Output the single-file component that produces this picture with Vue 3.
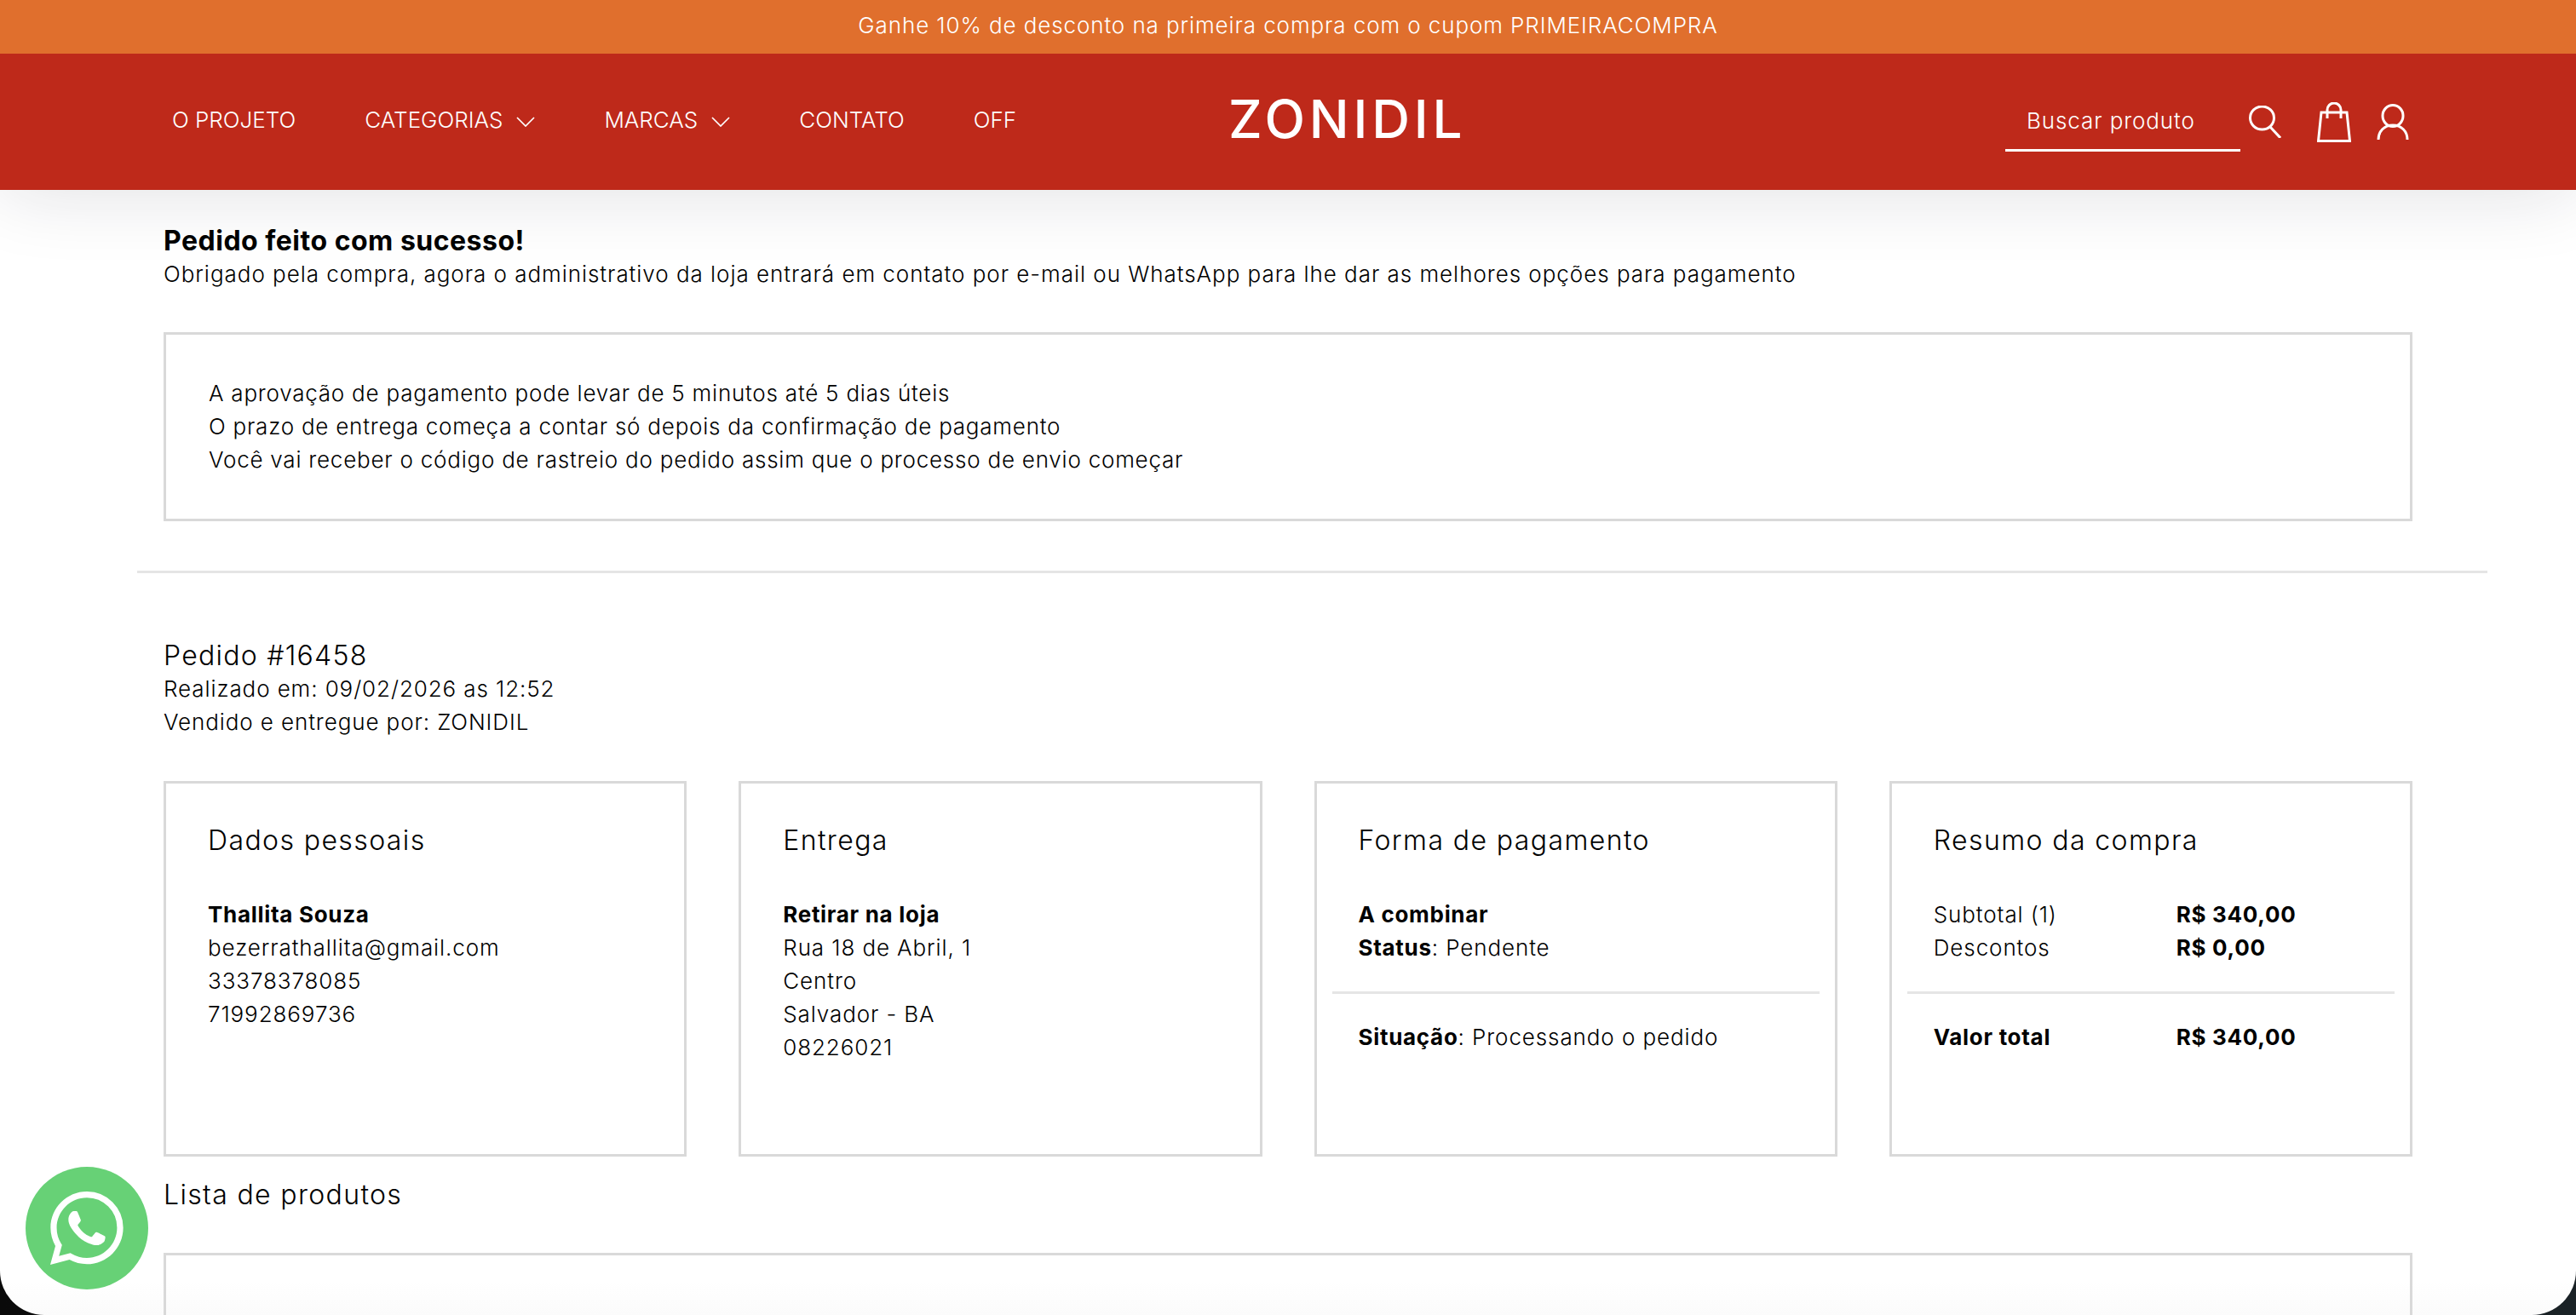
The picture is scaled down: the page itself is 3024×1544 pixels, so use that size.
<template>
  <div class="page">
    <div class="promo">Ganhe 10% de desconto na primeira compra com o cupom PRIMEIRACOMPRA</div>

    <header class="header">
      <nav class="nav">
        <a v-for="link in navLinks" :key="link.label" class="nav__link">
          {{ link.label }}
          <svg v-if="link.menu" class="nav__chevron" viewBox="0 0 22 12" aria-hidden="true">
            <path d="M1 1 L11 11 L21 1" fill="none" stroke="currentColor" stroke-width="1.7" />
          </svg>
        </a>
      </nav>

      <div class="logo">ZONIDIL</div>

      <div class="tools">
        <div class="search">Buscar produto</div>
        <svg class="icon icon--search" viewBox="0 0 38 38" aria-hidden="true">
          <ellipse cx="15.5" cy="14.5" rx="14" ry="13.5" fill="none" stroke="currentColor" stroke-width="3" />
          <path d="M25 25 L37 38" fill="none" stroke="currentColor" stroke-width="3" />
        </svg>
        <svg class="icon icon--bag" viewBox="0 0 40 47" aria-hidden="true">
          <path d="M5 12 H35 L38.5 45.5 H1.5 Z" fill="none" stroke="currentColor" stroke-width="3" />
          <path d="M12 19 V9 A8 8 0 0 1 28 9 V19" fill="none" stroke="currentColor" stroke-width="3" />
        </svg>
        <svg class="icon icon--user" viewBox="0 0 38 42" aria-hidden="true">
          <ellipse cx="19" cy="14" rx="12" ry="12.5" fill="none" stroke="currentColor" stroke-width="3" />
          <path d="M2 42 C2 32 9 25 19 25 C29 25 36 32 36 42" fill="none" stroke="currentColor" stroke-width="3" />
        </svg>
      </div>
    </header>

    <main class="content">
      <section class="success">
        <h1 class="success__title">Pedido feito com sucesso!</h1>
        <p class="success__text">Obrigado pela compra, agora o administrativo da loja entrará em contato por e-mail ou WhatsApp para lhe dar as melhores opções para pagamento</p>
      </section>

      <div class="notice">
        <p v-for="line in notices" :key="line">{{ line }}</p>
      </div>

      <hr class="divider" />

      <section class="order">
        <h2 class="order__title">Pedido #16458</h2>
        <p>Realizado em: 09/02/2026 as 12:52</p>
        <p>Vendido e entregue por: ZONIDIL</p>
      </section>

      <div class="cards">
        <article class="card">
          <h3 class="card__title">Dados pessoais</h3>
          <p><strong>Thallita Souza</strong></p>
          <p>bezerrathallita@gmail.com</p>
          <p>33378378085</p>
          <p>71992869736</p>
        </article>

        <article class="card">
          <h3 class="card__title">Entrega</h3>
          <p><strong>Retirar na loja</strong></p>
          <p>Rua 18 de Abril, 1</p>
          <p>Centro</p>
          <p>Salvador - BA</p>
          <p>08226021</p>
        </article>

        <article class="card">
          <h3 class="card__title">Forma de pagamento</h3>
          <p><strong>A combinar</strong></p>
          <p><strong>Status</strong>: Pendente</p>
          <hr class="card__rule" />
          <p><strong>Situação</strong>: Processando o pedido</p>
        </article>

        <article class="card">
          <h3 class="card__title">Resumo da compra</h3>
          <div v-for="row in summary" :key="row.label" class="sum-row">
            <span>{{ row.label }}</span>
            <strong>{{ row.value }}</strong>
          </div>
          <hr class="card__rule" />
          <div class="sum-row">
            <strong>Valor total</strong>
            <strong>R$ 340,00</strong>
          </div>
        </article>
      </div>

      <h2 class="products__title">Lista de produtos</h2>
      <div class="products"></div>
    </main>

    <a class="whatsapp" aria-label="WhatsApp">
      <svg viewBox="0 0 16 16" aria-hidden="true">
        <path fill="currentColor" d="M13.601 2.326A7.854 7.854 0 0 0 7.994 0C3.627 0 .068 3.558.064 7.926c0 1.399.366 2.76 1.057 3.965L0 16l4.204-1.102a7.933 7.933 0 0 0 3.79.965h.004c4.368 0 7.926-3.558 7.93-7.93A7.898 7.898 0 0 0 13.6 2.326zM7.994 14.521a6.573 6.573 0 0 1-3.356-.92l-.24-.144-2.494.654.666-2.433-.156-.251a6.56 6.56 0 0 1-1.007-3.505c0-3.626 2.957-6.584 6.591-6.584a6.56 6.56 0 0 1 4.66 1.931 6.557 6.557 0 0 1 1.928 4.66c-.004 3.639-2.961 6.592-6.592 6.592zm3.615-4.934c-.197-.099-1.17-.578-1.353-.646-.182-.065-.315-.099-.445.099-.133.197-.513.646-.627.775-.114.133-.232.148-.43.05-.197-.1-.836-.308-1.592-.985-.59-.525-.985-1.175-1.103-1.372-.114-.198-.011-.304.088-.403.087-.088.197-.232.296-.346.1-.114.133-.198.198-.33.065-.134.034-.248-.015-.347-.05-.099-.445-1.076-.612-1.47-.16-.389-.323-.335-.445-.34-.114-.007-.247-.007-.38-.007a.729.729 0 0 0-.529.247c-.182.198-.691.677-.691 1.654 0 .977.71 1.916.81 2.049.098.133 1.394 2.132 3.383 2.992.47.205.84.326 1.129.418.475.152.904.129 1.246.08.38-.058 1.171-.48 1.338-.943.164-.464.164-.86.114-.943-.049-.084-.182-.133-.38-.232z" />
      </svg>
    </a>
  </div>
</template>

<script setup>
const navLinks = [
  { label: 'O PROJETO' },
  { label: 'CATEGORIAS', menu: true },
  { label: 'MARCAS', menu: true },
  { label: 'CONTATO' },
  { label: 'OFF' },
]

const notices = [
  'A aprovação de pagamento pode levar de 5 minutos até 5 dias úteis',
  'O prazo de entrega começa a contar só depois da confirmação de pagamento',
  'Você vai receber o código de rastreio do pedido assim que o processo de envio começar',
]

const summary = [
  { label: 'Subtotal (1)', value: 'R$ 340,00' },
  { label: 'Descontos', value: 'R$ 0,00' },
]
</script>

<style>
html,
body {
  margin: 0;
  height: 1544px;
  overflow: hidden;
  background: linear-gradient(90deg, #0a0a0a, #1a2226);
}
</style>

<style scoped>
.page {
  position: relative;
  height: 1544px;
  overflow: hidden;
  border-radius: 0 0 52px 52px;
  background: linear-gradient(#fff calc(100% - 40px), #fbfbfb);
  font-family: Inter, 'Liberation Sans', sans-serif;
  font-size: 26px;
  font-weight: 350;
  line-height: 39px;
  letter-spacing: 0.9px;
  color: #000;
}

p,
h1,
h2,
h3 {
  margin: 0;
  font-weight: 350;
}

strong {
  letter-spacing: 0.7px;
}

.promo {
  position: relative;
  z-index: 1;
  height: 63px;
  background: #e06f2d;
  color: #fff;
  text-align: center;
  line-height: 60px;
  letter-spacing: 0.9px;
  font-weight: 300;
}

.header {
  position: relative;
  display: flex;
  align-items: center;
  height: 160px;
  padding: 0 196px 0 202px;
  background: #be291a;
  color: #fff;
  box-shadow: 0 0 90px rgba(20, 20, 40, 0.14);
}

.nav {
  flex: 1;
  display: flex;
  align-items: center;
  gap: 81px;
  margin-bottom: 5px;
  letter-spacing: 0;
}

.nav__link {
  display: flex;
  align-items: center;
  gap: 16px;
  font-weight: 300;
}

.nav__chevron {
  width: 22px;
  height: 12px;
  margin-top: 4px;
}

.logo {
  width: 272px;
  margin-bottom: 6px;
  font-size: 62px;
  line-height: 62px;
  letter-spacing: 4.8px;
  font-weight: 500;
  white-space: nowrap;
}

.tools {
  display: flex;
  align-items: center;
  margin-left: 640px;
}

.search {
  width: 276px;
  height: 70px;
  padding-left: 25px;
  box-sizing: border-box;
  border-bottom: 3px solid #fff;
  line-height: 68px;
  letter-spacing: 0.9px;
  font-weight: 300;
  white-space: nowrap;
}

.icon {
  flex: none;
}

.icon--search {
  width: 38px;
  height: 38px;
  margin-left: 10px;
}

.icon--bag {
  width: 40px;
  height: 47px;
  margin-left: 42px;
}

.icon--user {
  width: 38px;
  height: 42px;
  margin-left: 30px;
}

.content {
  padding: 0 192px;
}

.success {
  padding-top: 41px;
}

.success__title {
  font-size: 32px;
  line-height: 38px;
  letter-spacing: 0.5px;
  font-weight: 700;
}

.success__text {
  letter-spacing: 0.96px;
}

.notice {
  margin-top: 49px;
  padding: 49px 50px 50px;
  border: 3px solid #d9d9d9;
  letter-spacing: 0.77px;
}

.divider {
  margin: 58px -88px 0 -31px;
  height: 3px;
  border: 0;
  background: #e5e5e5;
}

.order {
  padding-top: 77px;
}

.order__title {
  font-size: 32px;
  line-height: 39px;
  letter-spacing: 1.25px;
}

.cards {
  display: grid;
  grid-template-columns: repeat(4, 1fr);
  gap: 61px;
  margin-top: 50px;
}

.card {
  height: 441px;
  box-sizing: border-box;
  padding: 47px 49px 0;
  border: 3px solid #d9d9d9;
}

.card__title {
  margin-bottom: 47px;
  font-size: 32px;
  line-height: 40px;
  letter-spacing: 1.4px;
}

.card__rule {
  margin: 32px -31px 0;
  height: 3px;
  border: 0;
  background: #e5e5e5;
}

.card__rule + p,
.card__rule + .sum-row {
  margin-top: 31px;
}

.sum-row {
  display: grid;
  grid-template-columns: 285px 1fr;
}

.products__title {
  margin-top: 25px;
  font-size: 32px;
  line-height: 40px;
  letter-spacing: 1.35px;
}

.products {
  height: 300px;
  margin-top: 48px;
  border: 3px solid #d9d9d9;
}

.whatsapp {
  position: absolute;
  left: 30px;
  bottom: 30px;
  display: flex;
  align-items: center;
  justify-content: center;
  width: 144px;
  height: 144px;
  border-radius: 50%;
  background: #67d176;
  color: #fff;
}

.whatsapp svg {
  width: 86px;
  height: 86px;
}
</style>
